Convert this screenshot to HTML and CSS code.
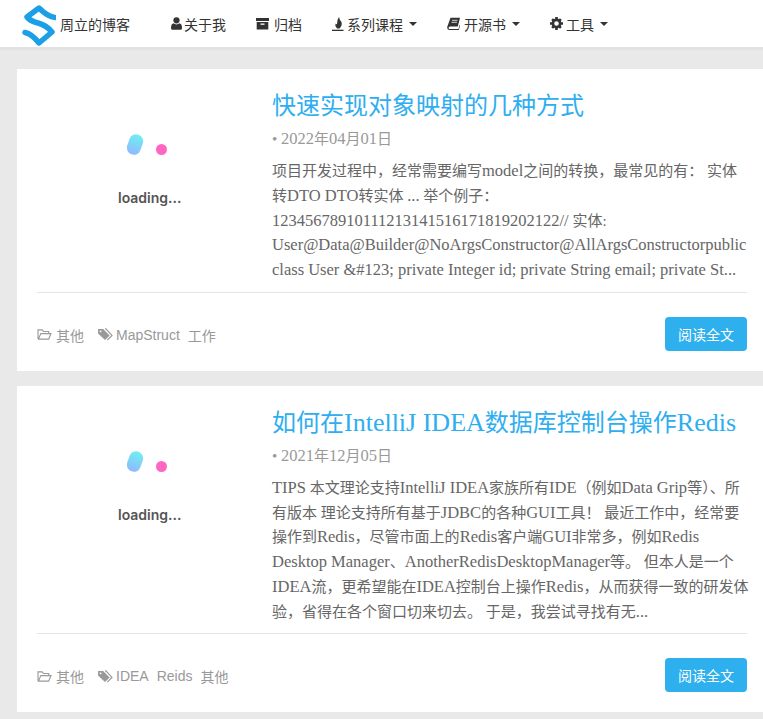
FILE: index.html
```html
<!DOCTYPE html>
<html lang="zh-CN">
<head>
<meta charset="utf-8">
<title>周立的博客</title>
<link rel="stylesheet" href="styles.css">
</head>
<body>
<header class="navbar">
  <a class="brand">
    <svg class="logo" viewBox="0 0 34 46"><path d="M33 16.500 Q26 16 17 7 L5 16 Q8 20 16 22 Q24 24 30 31 L17 42 Q10 33 3 31.500" fill="none" stroke="#1b9fe6" stroke-width="5.500" stroke-linejoin="round" stroke-linecap="round"/></svg>
    <span>周立的博客</span>
  </a>
  <nav class="menu">
    <a class="item"><svg class="ic ic-user" viewBox="0 0 11 13"><circle cx="5.500" cy="3.300" r="3.100"/><path d="M0.800 12.800 Q0 12.500 0 10 Q0.200 6.800 2.300 6.300 Q5.500 8.500 8.700 6.300 Q10.800 6.800 11 10 Q11 12.500 10.200 12.800 Z"/></svg>关于我</a>
    <a class="item"><svg class="ic ic-box" viewBox="0 0 13 13"><path d="M0 1 H13 V4 H0 Z M0.700 5 H12.300 V12.500 H0.700 Z"/><rect x="4.500" y="6.500" width="4" height="1.300" fill="#fff"/></svg>归档</a>
    <a class="item"><svg class="ic ic-fire" viewBox="0 0 12 14"><path d="M7 0 Q7.500 3 9.500 5 Q10.500 8.500 7.500 11.500 H5 Q2.500 9 3.500 6.500 Q4.300 7.500 5 7 Q4.800 3 7 0 Z"/><rect x="0" y="12.700" width="11.500" height="1.300"/></svg>系列课程<i class="caret"></i></a>
    <a class="item"><svg class="ic ic-book" viewBox="0 0 13 13"><path d="M3.500 0.800 H13 L10.800 9.500 H3 Q1.800 9.500 1.500 11 Q1.500 12 3 12 H11.500 L12.700 7.500 L13 9 L11.800 13 H2.800 Q-0.300 12.800 0.300 9.800 Z"/><path d="M5 3.300 H10.500 M4.500 5.300 H10" stroke="#fff" stroke-width="0.800"/></svg>开源书<i class="caret"></i></a>
    <a class="item"><svg class="ic ic-gear" viewBox="0 0 13 13"><circle cx="6.500" cy="6.500" r="3.600" fill="none" stroke="#333" stroke-width="2.600"/><path d="M5.200 0 H7.800 V2.500 H5.200 Z M5.200 10.500 H7.800 V13 H5.200 Z M0 5.200 H2.500 V7.800 H0 Z M10.500 5.200 H13 V7.800 H10.500 Z M1.200 3 L3 1.200 L4.500 2.700 L2.700 4.500 Z M10 1.200 L11.800 3 L10.300 4.500 L8.500 2.700 Z M1.200 10 L2.700 8.500 L4.500 10.300 L3 11.800 Z M8.500 10.300 L10.300 8.500 L11.800 10 L10 11.800 Z"/></svg>工具<i class="caret"></i></a>
  </nav>
</header>
<main class="list">
  <article class="card">
    <div class="card-body">
      <div class="thumb">
        <div class="loader"><i class="pill"></i><i class="dot"></i></div>
        <div class="loading">loading...</div>
      </div>
      <div class="content">
        <h2 class="title">快速实现对象映射的几种方式</h2>
        <div class="date">• <span class="en">2022</span>年<span class="en">04</span>月<span class="en">01</span>日</div>
        <p class="excerpt">项目开发过程中，经常需要编写<span class="en">model</span>之间的转换，最常见的有： 实体<br>转<span class="en">DTO DTO</span>转实体 <span class="en">...</span> 举个例子：<br><span class="en">12345678910111213141516171819202122//</span> 实体:<br><span class="en">User@Data@Builder@NoArgsConstructor@AllArgsConstructorpublic</span><br><span class="en">class User &amp;#123; private Integer id; private String email; private St...</span></p>
      </div>
    </div>
    <footer class="card-foot">
      <div class="meta">
        <svg class="mi" viewBox="0 0 16 14"><path d="M1 12 V2 H5.500 L7 3.800 H12.500 V6 M1 12 H12.500 L15 6 H4 L1.500 12" fill="none" stroke="#999" stroke-width="1.200"/></svg><a class="cat">其他</a>
        <svg class="mi mi-tag" viewBox="0 0 16 14"><path d="M0.500 1 H6 L13 8 L8 13 L0.500 6 Z" fill="#999"/><path d="M8 1 H9 L15.500 8 L10.500 13" fill="none" stroke="#999" stroke-width="1.300"/><circle cx="3.200" cy="3.600" r="1" fill="#fff"/></svg><a class="tag">MapStruct</a><a class="tag">工作</a>
      </div>
      <a class="btn">阅读全文</a>
    </footer>
  </article>
  <article class="card">
    <div class="card-body">
      <div class="thumb">
        <div class="loader"><i class="pill"></i><i class="dot"></i></div>
        <div class="loading">loading...</div>
      </div>
      <div class="content">
        <h2 class="title">如何在<span class="en">IntelliJ IDEA</span>数据库控制台操作<span class="en">Redis</span></h2>
        <div class="date">• <span class="en">2021</span>年<span class="en">12</span>月<span class="en">05</span>日</div>
        <p class="excerpt"><span class="en">TIPS</span> 本文理论支持<span class="en">IntelliJ IDEA</span>家族所有<span class="en">IDE</span>（例如<span class="en">Data Grip</span>等）、所<br>有版本 理论支持所有基于<span class="en">JDBC</span>的各种<span class="en">GUI</span>工具！ 最近工作中，经常要<br>操作到<span class="en">Redis</span>，尽管市面上的<span class="en">Redis</span>客户端<span class="en">GUI</span>非常多，例如<span class="en">Redis</span><br><span class="en">Desktop Manager</span>、<span class="en">AnotherRedisDesktopManager</span>等。 但本人是一个<br><span class="en">IDEA</span>流，更希望能在<span class="en">IDEA</span>控制台上操作<span class="en">Redis</span>，从而获得一致的研发体<br>验，省得在各个窗口切来切去。 于是，我尝试寻找有无<span class="en">...</span></p>
      </div>
    </div>
    <footer class="card-foot">
      <div class="meta">
        <svg class="mi" viewBox="0 0 16 14"><path d="M1 12 V2 H5.500 L7 3.800 H12.500 V6 M1 12 H12.500 L15 6 H4 L1.500 12" fill="none" stroke="#999" stroke-width="1.200"/></svg><a class="cat">其他</a>
        <svg class="mi mi-tag" viewBox="0 0 16 14"><path d="M0.500 1 H6 L13 8 L8 13 L0.500 6 Z" fill="#999"/><path d="M8 1 H9 L15.500 8 L10.500 13" fill="none" stroke="#999" stroke-width="1.300"/><circle cx="3.200" cy="3.600" r="1" fill="#fff"/></svg><a class="tag">IDEA</a><a class="tag">Reids</a><a class="tag">其他</a>
      </div>
      <a class="btn">阅读全文</a>
    </footer>
  </article>
</main>
</body>
</html>
```
FILE: styles.css
```css
* { box-sizing: border-box; }
html, body { margin: 0; padding: 0; }
body {
  background: #e9e9e9;
  height: 719px;
  overflow: hidden;
  font-family: "Liberation Sans", "Noto Sans CJK SC", sans-serif;
  color: #333;
}
.navbar {
  height: 47px;
  background: #fff;
  box-shadow: 0 3px 0 #e2e2e2;
  display: flex;
  align-items: center;
  padding-left: 22px;
  font-size: 14px;
}
.brand {
  display: flex;
  align-items: center;
  gap: 4px;
  width: 149px;
  flex: none;
}
.logo { width: 34px; height: 46px; flex: none; }
.menu { display: flex; gap: 30px; }
.item {
  display: flex;
  align-items: center;
  white-space: nowrap;
}
.ic { height: 13px; fill: #333; flex: none; }
.ic-user { width: 11px; margin-right: 2px; }
.ic-box { width: 13px; margin-right: 5px; }
.ic-fire { width: 12px; height: 14px; margin-right: 3px; }
.ic-book { width: 13px; margin-right: 4px; }
.ic-gear { width: 13px; margin-right: 3px; }
.caret {
  width: 0;
  height: 0;
  margin-left: 6px;
  border-left: 4px solid transparent;
  border-right: 4px solid transparent;
  border-top: 4px solid #333;
}
.list {
  display: flex;
  flex-direction: column;
  gap: 15px;
  margin: 22px 0 0 17px;
}
.card { background: #fff; padding: 0 16px 0 20px; }
.card-body {
  display: flex;
  border-bottom: 1px solid #e5e5e5;
  padding-top: 19px;
}
.thumb {
  width: 235px;
  flex: none;
  padding-top: 46px;
  display: flex;
  flex-direction: column;
  align-items: flex-start;
}
.loader { position: relative; height: 37px; width: 100%; }
.pill {
  position: absolute;
  left: 91px;
  top: 0;
  width: 14px;
  height: 21px;
  border-radius: 7px;
  transform: rotate(20deg);
  background: linear-gradient(#6ff0f0, #8fb8ff);
}
.dot {
  position: absolute;
  left: 119px;
  top: 10px;
  width: 11px;
  height: 11px;
  border-radius: 50%;
  background: #ff66c4;
}
.loading {
  margin: 18px 0 0 81px;
  font: 600 14px/18px Inter, "Liberation Sans", sans-serif;
  color: #555;
}
.content { flex: 1; min-width: 0; }
.title {
  margin: 0;
  font: 400 24px/36px "Liberation Serif", "Noto Sans CJK SC", serif;
  color: #2eaef0;
  white-space: nowrap;
}
.title .en { font-size: 26px; }
.date {
  margin-top: 3px;
  font: 400 15px/24px "Liberation Serif", "Noto Sans CJK SC", serif;
  color: #999;
}
.excerpt {
  margin: 8px 0 9px;
  font: 400 15px/24.750px "Liberation Serif", "Noto Sans CJK SC", serif;
  color: #666;
  white-space: nowrap;
}
.en { font-size: 16.500px; line-height: 1; }
.card-foot {
  display: flex;
  align-items: center;
  justify-content: space-between;
  height: 78px;
  padding-top: 4px;
}
.meta {
  display: flex;
  align-items: center;
  margin-top: 2px;
  font-size: 14px;
  color: #999;
}
.mi { width: 15px; height: 13px; margin-right: 4px; flex: none; }
.mi-tag { width: 16px; margin-left: 13px; margin-right: 3px; }
.tag { margin-right: 8px; }
.btn {
  display: flex;
  align-items: center;
  justify-content: center;
  width: 82px;
  height: 34px;
  background: #2eb0ee;
  color: #fff;
  border-radius: 4px;
  font-size: 14px;
}
```
